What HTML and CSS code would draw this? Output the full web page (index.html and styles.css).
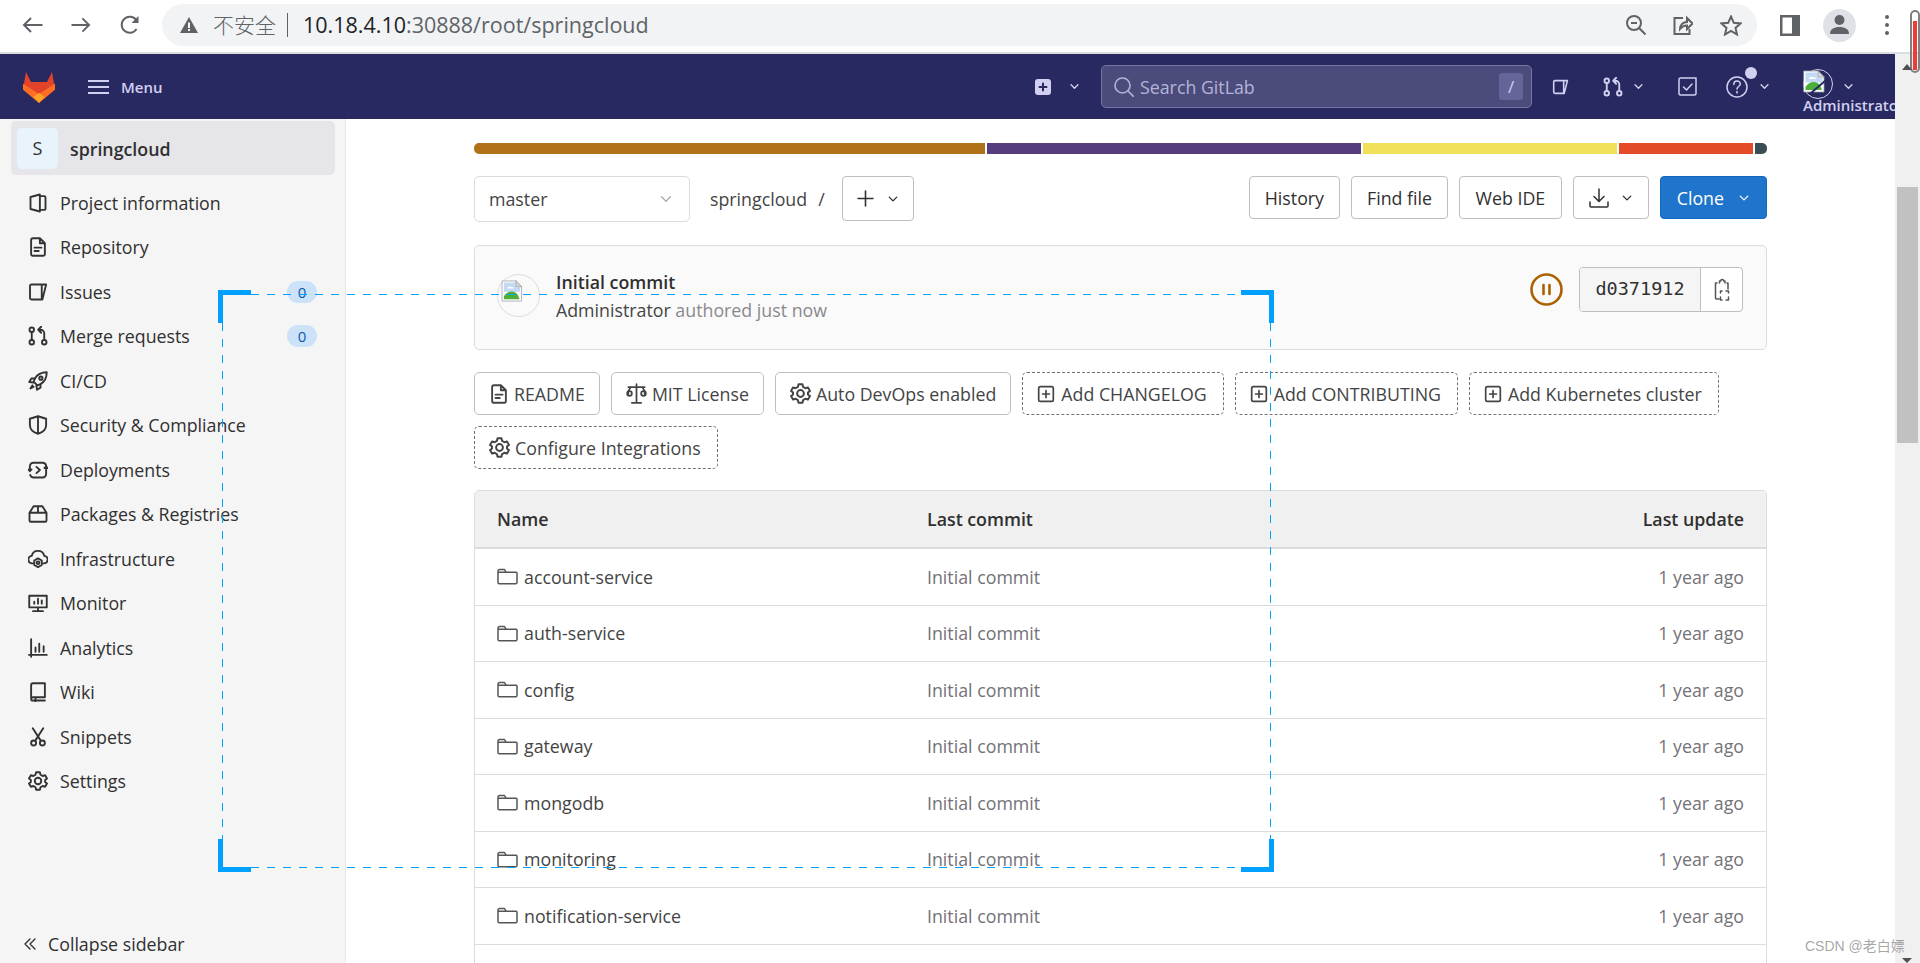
FILE: index.html
```html
<!DOCTYPE html>
<html>
<head>
    <title>springcloud</title>
    <link rel="stylesheet" href="styles.css">
</head>
<body>
    <svg class="icon-defs" width="0" height="0">
        <defs>
            <symbol id="i-project" viewBox="0 0 16 16"><path d="M2 3.2 9.5 1.2v13.6L2 12.8zM9.5 2.5h3.5a1 1 0 0 1 1 1v9a1 1 0 0 1-1 1H9.5"/></symbol>
            <symbol id="i-doc" viewBox="0 0 16 16"><path d="M2.5 2.5A1.5 1.5 0 0 1 4 1h5.5l4 4v8.5A1.5 1.5 0 0 1 12 15H4a1.5 1.5 0 0 1-1.5-1.5zM9.5 1v4h4M5.2 8.5h5.6M5.2 11.2h3.4"/></symbol>
            <symbol id="i-issues" viewBox="0 0 16 16"><path d="M2.8 2h11.7l-3 12H2.8a1.2 1.2 0 0 1-1.2-1.2V3.2A1.2 1.2 0 0 1 2.8 2zM11 2v12"/></symbol>
            <symbol id="i-mr" viewBox="0 0 16 16"><circle cx="3" cy="3" r="1.8"/><circle cx="3" cy="13" r="1.8"/><circle cx="13" cy="13" r="1.8"/><path d="M3 4.8v6.4M13 11.2V6a3 3 0 0 0-3-3H8.5M10.5.6 8.2 3l2.3 2.4"/></symbol>
            <symbol id="i-rocket" viewBox="0 0 16 16"><path d="M15 1c-4.500 0-7.500 1.500-9.500 5L4.500 8.500l3 3 2.500-1c3.500-2 5-5 5-9.500z"/><circle cx="10.300" cy="5.700" r="1.300"/><path d="M5.500 6H2.700L1 8.800l3.500.5M10 10.500v2.800L7.200 15l-.5-3.500M3.500 11.500 2 14l2.500-1.500"/></symbol>
            <symbol id="i-shield" viewBox="0 0 16 16"><path d="M8 1l6.500 2v5c0 3.400-2.500 5.800-6.500 7-4-1.200-6.500-3.600-6.500-7V3zM8 1v14"/></symbol>
            <symbol id="i-deploy" viewBox="0 0 16 16"><path d="M1.500 9V5A2.800 2.800 0 0 1 4.300 2.200H12a2.800 2.800 0 0 1 2.500 2.500M14.500 7v4.200A2.800 2.800 0 0 1 11.700 14H4.300a2.800 2.800 0 0 1-2.500-2M6.800 5.500 9.500 8l-2.700 2.500M.2 7.500l1.300 1.500 1.300-1.500M13.200 6.500l1.300-1.500 1.300 1.500"/></symbol>
            <symbol id="i-package" viewBox="0 0 16 16"><path d="M1.200 7 4.500 1.800h7L14.800 7v6.200a1 1 0 0 1-1 1H2.200a1 1 0 0 1-1-1zM1.200 7h13.600M8 1.800V7"/></symbol>
            <symbol id="i-infra" viewBox="0 0 16 16"><path d="M4 11.500H3.500a3 3 0 0 1-.5-6C3.500 3 5.500 1.500 8 1.500s4.500 1.500 5 4a3 3 0 0 1-.5 6H12"/><path d="M8 7.500l3 1.700v3.600L8 14.500l-3-1.700V9.200z"/><circle cx="8" cy="11" r="1.100"/></symbol>
            <symbol id="i-monitor" viewBox="0 0 16 16"><path d="M1 2.200h14v9.300H1zM8 11.500V14M4 14.500h8M5 8.500V7M8 8.500V4.500M11 8.500V6"/></symbol>
            <symbol id="i-analytics" viewBox="0 0 16 16"><path d="M2.500 1v14M.8 13.500H15M6 11V7.500M9 11V4.500M12.500 11V6.500"/></symbol>
            <symbol id="i-wiki" viewBox="0 0 16 16"><path d="M2.500 13.200V2.500A1.500 1.500 0 0 1 4 1h9.500v11.200H3.800a1.300 1.300 0 0 0 0 2.600h9.700M6 12.500v3"/></symbol>
            <symbol id="i-snippets" viewBox="0 0 16 16"><path d="M3.800 1l6 9.300M12.200 1l-6 9.300"/><circle cx="4.500" cy="12.800" r="2"/><circle cx="11.500" cy="12.800" r="2"/></symbol>
            <symbol id="i-gear" viewBox="0 0 16 16"><path d="M6.500 1H9.500L10 3 11.700 4 13.700 3.400 15.200 6 13.700 7.200V8.800L15.200 10 13.700 12.600 11.700 12 10 13 9.500 15H6.500L6 13 4.300 12 2.300 12.600.8 10 2.300 8.800V7.200L.8 6 2.300 3.400 4.300 4 6 3Z"/><circle cx="8" cy="8" r="2.600"/></symbol>
            <symbol id="i-chev" viewBox="0 0 16 16"><path d="M3 5.500l5 5 5-5"/></symbol>
            <symbol id="i-add" viewBox="0 0 16 16"><rect x="1.500" y="1.500" width="13" height="13" rx="1.500"/><path d="M8 5v6M5 8h6"/></symbol>
            <symbol id="i-folder" viewBox="0 0 21 17"><path d="M1 3a1.500 1.500 0 0 1 1.500-1.500H7.500L9 4.200H19a1.200 1.200 0 0 1 1 1.100V14.500A1.200 1.200 0 0 1 19 15.700H2.200A1.200 1.200 0 0 1 1 14.500zM1 4.200h8"/></symbol>
            <symbol id="i-broken" viewBox="0 0 22 23">
                <path class="b-page" d="M1 1h14l6 6v15H1z"/>
                <path class="b-sky" d="M2.500 2.500h12v5h5v5H2.500z"/>
                <path class="b-cloud" d="M6 9c0-2 3-3 4.500-1.500C12 7 13 8 13 9z"/>
                <path class="b-hill" d="M2.500 20v-3c3-5 8-6 12-4 2 1 3 3 4.500 7z"/>
                <path class="b-fold" d="M15 1v6h6z"/>
            </symbol>
        </defs>
    </svg>

    <div class="chrome">
        <svg class="c-icon back" viewBox="0 0 21 16"><path d="M20.500 8H2M9 1 2 8l7 7"/></svg>
        <svg class="c-icon forward" viewBox="0 0 21 16"><path d="M.5 8H19M12 1l7 7-7 7"/></svg>
        <svg class="c-icon reload" viewBox="0 0 21 20"><path d="M17.500 14a8 8 0 1 1 0-8.500"/><path class="c-fill" d="M19.500 1v7h-7z"/></svg>
        <div class="omnibox">
            <svg class="warn" viewBox="0 0 18 16"><path d="M9 0 18 16H0z"/><path class="warn-mark" d="M8 5.500h2v5.500H8zM8 12h2v2H8z"/></svg>
            <span class="insecure">不安全</span>
            <span class="sep"></span>
            <span class="url"><b>10.18.4.10</b>:30888/root/springcloud</span>
            <div class="omni-actions">
                <svg class="c-icon zoom-out" viewBox="0 0 20 20"><circle cx="8" cy="8" r="7"/><path d="M13 13l6.500 6.500M5 8h6"/></svg>
                <svg class="c-icon share" viewBox="0 0 20 20"><path d="M10 3H1.500v16h15v-5"/><path d="M7 14c0-4 3-7 7-7V3l5.500 5.500L14 14v-3.500c-3 0-5 1-7 3.500z"/></svg>
                <svg class="c-icon star" viewBox="0 0 22 21"><path d="M11 1.500l2.800 6.300 6.700.6-5 4.500 1.500 6.600-6-3.500-6 3.500 1.500-6.600-5-4.500 6.700-.6z"/></svg>
            </div>
        </div>
        <svg class="panel" viewBox="0 0 20 21"><path d="M0 0h20v21H0zM2.500 2.500v16H12v-16z"/></svg>
        <div class="profile">
            <svg viewBox="0 0 33 33"><circle cx="16.500" cy="11" r="5"/><path d="M7 25c0-5 4-7 9.500-7s9.500 2 9.500 7z"/></svg>
        </div>
        <div class="dots"><i></i><i></i><i></i></div>
    </div>

    <div class="window">
        <div class="viewport">
            <div class="navbar">
                <svg class="logo" viewBox="0 0 34 34">
                    <path fill="#e24329" d="M17 33 1 19.500 4 2 9 12h16L30 2l3 17.500z"/>
                    <path fill="#fc6d26" d="M1 13.500 17 24 11 27 17 33 1 19.500z"/>
                    <path fill="#fc6d26" d="M33 13.500 17 24 23 27 17 33 33 19.500z"/>
                    <path fill="#fca326" d="M17 33 11 27 17 23 23 27z"/>
                </svg>
                <svg class="menu-icon" viewBox="0 0 21 14"><path d="M0 1h21M0 7h21M0 13h21"/></svg>
                <span class="menu-label">Menu</span>

                <div class="nav-right">
                    <svg class="new-box" viewBox="0 0 16 16"><path class="new-bg" d="M3 0h10a3 3 0 0 1 3 3v10a3 3 0 0 1-3 3H3a3 3 0 0 1-3-3V3a3 3 0 0 1 3-3z"/><path class="new-plus" d="M8 4.500v7M4.500 8h7"/></svg>
                    <svg class="nav-chev ml-18"><use href="#i-chev"/></svg>
                    <div class="search">
                        <svg class="search-icon" viewBox="0 0 20 20"><circle cx="8.500" cy="8.500" r="7.500"/><path d="M14 14l5.500 5.500"/></svg>
                        <span>Search GitLab</span>
                        <span class="slash">/</span>
                    </div>
                    <svg class="nav-icon w17 ml-20"><use href="#i-issues"/></svg>
                    <svg class="nav-icon w20 ml-34"><use href="#i-mr"/></svg>
                    <svg class="nav-chev ml-10"><use href="#i-chev"/></svg>
                    <svg class="nav-icon w19 ml-34" viewBox="0 0 19 19"><path d="M18 1H2.500A1.500 1.500 0 0 0 1 2.500v14A1.500 1.500 0 0 0 2.500 18h14a1.500 1.500 0 0 0 1.500-1.500V1zM5.500 10l3 3 5.500-6"/></svg>
                    <div class="help">
                        <svg class="nav-icon w22" viewBox="0 0 22 22"><circle cx="11" cy="11" r="10"/><path d="M7.800 8.500c0-4.500 6.500-4.500 6.500-.5 0 2.500-3.300 2.500-3.300 5M11 15.500v1.500"/></svg>
                        <span class="help-dot"></span>
                    </div>
                    <svg class="nav-chev ml-11"><use href="#i-chev"/></svg>
                    <div class="user">
                        <svg class="user-img" viewBox="0 0 22 23"><use href="#i-broken"/><path class="user-slash" d="M8 23 22 11"/></svg>
                        <span class="user-name">Administrator</span>
                    </div>
                    <svg class="nav-chev ml-10"><use href="#i-chev"/></svg>
                </div>
            </div>

            <div class="page">
                <aside class="sidebar">
                    <div class="project-head">
                        <span class="project-avatar">S</span>
                        <span class="project-name">springcloud</span>
                    </div>
                    <a class="side-item"><svg class="side-icon"><use href="#i-project"/></svg>Project information</a>
                    <a class="side-item"><svg class="side-icon"><use href="#i-doc"/></svg>Repository</a>
                    <a class="side-item"><svg class="side-icon"><use href="#i-issues"/></svg>Issues<span class="count">0</span></a>
                    <a class="side-item"><svg class="side-icon"><use href="#i-mr"/></svg>Merge requests<span class="count">0</span></a>
                    <a class="side-item"><svg class="side-icon"><use href="#i-rocket"/></svg>CI/CD</a>
                    <a class="side-item"><svg class="side-icon"><use href="#i-shield"/></svg>Security &amp; Compliance</a>
                    <a class="side-item"><svg class="side-icon"><use href="#i-deploy"/></svg>Deployments</a>
                    <a class="side-item"><svg class="side-icon"><use href="#i-package"/></svg>Packages &amp; Registries</a>
                    <a class="side-item"><svg class="side-icon"><use href="#i-infra"/></svg>Infrastructure</a>
                    <a class="side-item"><svg class="side-icon"><use href="#i-monitor"/></svg>Monitor</a>
                    <a class="side-item"><svg class="side-icon"><use href="#i-analytics"/></svg>Analytics</a>
                    <a class="side-item"><svg class="side-icon"><use href="#i-wiki"/></svg>Wiki</a>
                    <a class="side-item"><svg class="side-icon"><use href="#i-snippets"/></svg>Snippets</a>
                    <a class="side-item"><svg class="side-icon"><use href="#i-gear"/></svg>Settings</a>
                    <div class="collapse">
                        <svg viewBox="0 0 12 12"><path d="M6 1 1 6l5 5M11 1 6 6l5 5"/></svg>
                        Collapse sidebar
                    </div>
                </aside>

                <main class="content">
                    <div class="lang-bar">
                        <span class="lang java"></span>
                        <span class="lang docker"></span>
                        <span class="lang js"></span>
                        <span class="lang html"></span>
                        <span class="lang other"></span>
                    </div>

                    <div class="tree-bar">
                        <div class="branch">master<svg class="branch-chev"><use href="#i-chev"/></svg></div>
                        <span class="crumb">springcloud</span>
                        <span class="crumb-slash">/</span>
                        <button class="btn add-btn"><svg class="plus" viewBox="0 0 16 16"><path d="M8 1v14M1 8h14"/></svg><svg class="btn-chev"><use href="#i-chev"/></svg></button>
                        <div class="tree-actions">
                            <button class="btn">History</button>
                            <button class="btn">Find file</button>
                            <button class="btn web-ide">Web IDE</button>
                            <button class="btn dl-btn"><svg class="btn-icon" viewBox="0 0 20 20"><path d="M10 1v12M5 8.500l5 5 5-5M1 14v4a1 1 0 0 0 1 1h16a1 1 0 0 0 1-1v-4"/></svg><svg class="btn-chev"><use href="#i-chev"/></svg></button>
                            <button class="btn clone">Clone<svg class="btn-chev"><use href="#i-chev"/></svg></button>
                        </div>
                    </div>

                    <div class="commit">
                        <div class="commit-avatar"><svg><use href="#i-broken"/></svg></div>
                        <div class="commit-text">
                            <div class="commit-title">Initial commit</div>
                            <div class="commit-meta">Administrator <span>authored just now</span></div>
                        </div>
                        <svg class="status" viewBox="0 0 33 33"><circle cx="16.500" cy="16.500" r="15"/><path d="M13.500 12v9M19.500 12v9"/></svg>
                        <div class="sha-group">
                            <span class="sha">d0371912</span>
                            <span class="sha-copy">
                                <svg viewBox="0 0 16 24"><path d="M3 5H1.500v15a1 1 0 0 0 1 1H5M5.500 5V3h1.200a1.500 1.500 0 0 1 3 0h1.300v2M13 5h1v6M8 13H6.500v2M12 13h2.500v2M6.500 19v3h1.500M14.500 19v3H12"/></svg>
                            </span>
                        </div>
                    </div>

                    <div class="shortcuts">
                        <a class="pill"><svg class="pill-icon"><use href="#i-doc"/></svg>README</a>
                        <a class="pill"><svg class="pill-icon wide" viewBox="0 0 18 18"><path d="M9 1v15M5 17h8M2 3.500h14M4 3.500 2 7v2.500M14 3.500 16 7v2.500"/><circle cx="3" cy="9" r="2"/><circle cx="15" cy="9" r="2"/></svg>MIT License</a>
                        <a class="pill"><svg class="pill-icon wide"><use href="#i-gear"/></svg>Auto DevOps enabled</a>
                        <a class="pill dashed"><svg class="pill-icon small"><use href="#i-add"/></svg>Add CHANGELOG</a>
                        <a class="pill dashed"><svg class="pill-icon small"><use href="#i-add"/></svg>Add CONTRIBUTING</a>
                        <a class="pill dashed"><svg class="pill-icon small"><use href="#i-add"/></svg>Add Kubernetes cluster</a>
                        <a class="pill dashed"><svg class="pill-icon wide"><use href="#i-gear"/></svg>Configure Integrations</a>
                    </div>

                    <div class="files">
                        <div class="file-row file-head">
                            <span>Name</span><span>Last commit</span><span class="when">Last update</span>
                        </div>
                        <div class="file-row"><span class="fname"><svg class="folder"><use href="#i-folder"/></svg>account-service</span><span class="msg">Initial commit</span><span class="when">1 year ago</span></div>
                        <div class="file-row"><span class="fname"><svg class="folder"><use href="#i-folder"/></svg>auth-service</span><span class="msg">Initial commit</span><span class="when">1 year ago</span></div>
                        <div class="file-row"><span class="fname"><svg class="folder"><use href="#i-folder"/></svg>config</span><span class="msg">Initial commit</span><span class="when">1 year ago</span></div>
                        <div class="file-row"><span class="fname"><svg class="folder"><use href="#i-folder"/></svg>gateway</span><span class="msg">Initial commit</span><span class="when">1 year ago</span></div>
                        <div class="file-row"><span class="fname"><svg class="folder"><use href="#i-folder"/></svg>mongodb</span><span class="msg">Initial commit</span><span class="when">1 year ago</span></div>
                        <div class="file-row"><span class="fname"><svg class="folder"><use href="#i-folder"/></svg>monitoring</span><span class="msg">Initial commit</span><span class="when">1 year ago</span></div>
                        <div class="file-row"><span class="fname"><svg class="folder"><use href="#i-folder"/></svg>notification-service</span><span class="msg">Initial commit</span><span class="when">1 year ago</span></div>
                        <div class="file-row"></div>
                    </div>
                </main>
            </div>
        </div>

        <div class="scrollbar"><div class="thumb"></div></div>
    </div>

    <!-- screenshot tool selection drawn over the page -->
    <div class="crop">
        <span class="crop-line top"></span>
        <span class="crop-line bottom"></span>
        <span class="crop-line left"></span>
        <span class="crop-line right"></span>
        <span class="corner tl"></span>
        <span class="corner tr"></span>
        <span class="corner bl"></span>
        <span class="corner br"></span>
    </div>

    <div class="tool-marker"><i></i></div>
    <span class="arrow-up"></span>
    <span class="arrow-down"></span>
    <span class="watermark">CSDN @老白嫖</span>
</body>
</html>
```

FILE: styles.css
```css
/* GENERAL */
html, body {
    margin: 0;
    padding: 0;
    height: 100%;
    overflow: hidden;
}

body {
    background-color: #fff;
    color: #303030;
    font-family: 'Open Sans', 'Noto Sans CJK SC', sans-serif;
    font-size: 17.8px;
}

svg {
    flex: none;
    fill: none;
    stroke: currentColor;
    stroke-width: 1.5;
    stroke-linejoin: round;
    stroke-linecap: round;
}

.icon-defs {
    position: absolute;
}

.b-page { fill: #fff; stroke: #9aa0a6; stroke-width: .8; }
.b-sky { fill: #c3d9f5; stroke: none; }
.b-cloud { fill: #fff; stroke: none; }
.b-hill { fill: #4caf3a; stroke: none; }
.b-fold { fill: #d5d7da; stroke: #9aa0a6; stroke-width: .8; }


/* BROWSER BAR */
.chrome {
    display: flex;
    align-items: center;
    height: 50px;
    padding: 0 31px 2px 22px;
    border-bottom: 2px solid #dadce0;
    color: #5f6368;
}

.c-icon {
    stroke-width: 2;
    stroke-linecap: butt;
    stroke-linejoin: miter;
}

.c-fill {
    fill: #5f6368;
    stroke: none;
}

.back { width: 21px; height: 16px; }
.forward { width: 20px; height: 16px; margin-left: 28px; }
.reload { width: 21px; height: 20px; margin-left: 28px; }

.omnibox {
    display: flex;
    align-items: center;
    flex: 1;
    height: 42px;
    margin-left: 22px;
    padding: 0 15px 0 18px;
    background-color: #f1f3f4;
    border-radius: 21px;
}

.warn {
    width: 18px;
    height: 16px;
    fill: #5f6368;
    stroke: none;
}

.warn-mark {
    fill: #f1f3f4;
}

.insecure {
    margin-left: 15px;
    margin-top: -2px;
    font-size: 21px;
    font-family: 'Noto Sans CJK SC', sans-serif;
    font-weight: 300;
}

.sep {
    width: 1px;
    height: 24px;
    margin-left: 11px;
    background-color: #5f6368;
}

.url {
    margin-left: 15px;
    margin-top: -2px;
    font-size: 21.5px;
    white-space: nowrap;
}

.url b {
    font-weight: 400;
    color: #202124;
}

.omni-actions {
    display: flex;
    align-items: center;
    margin-left: auto;
    gap: 27px;
}

.zoom-out, .share { width: 20px; height: 20px; }
.star { width: 22px; height: 21px; }

.panel {
    width: 20px;
    height: 21px;
    margin-left: 23px;
    fill: #5f6368;
    fill-rule: evenodd;
    stroke: none;
}

.profile {
    width: 33px;
    height: 33px;
    margin-left: 23px;
    border-radius: 50%;
    background-color: #dee1e6;
}

.profile svg {
    display: block;
    fill: #5f6368;
    stroke: none;
}

.dots {
    display: flex;
    flex-direction: column;
    gap: 4px;
    margin-left: 29px;
}

.dots i {
    width: 4px;
    height: 4px;
    border-radius: 50%;
    background-color: #5f6368;
}


/* WINDOW */
.window {
    display: flex;
    height: 909px;
}

.viewport {
    flex: 1;
    min-width: 0;
    display: flex;
    flex-direction: column;
}

.scrollbar {
    flex: none;
    width: 25px;
    background-color: #f0f0f0;
    position: relative;
    padding-top: 133px;
    box-sizing: border-box;
}

.thumb {
    width: 21px;
    height: 256px;
    margin-left: 2px;
    background-color: #c1c1c1;
}


/* NAVBAR */
.navbar {
    display: flex;
    align-items: center;
    flex: none;
    height: 65px;
    padding-left: 22px;
    background-color: #292961;
    color: #d1d0f0;
    overflow: hidden;
}

.logo {
    width: 34px;
    height: 34px;
    stroke: none;
}

.menu-icon {
    width: 21px;
    height: 14px;
    margin-left: 32px;
    stroke-width: 2;
}

.menu-label {
    margin-left: 12px;
    font-size: 15px;
    font-weight: 600;
}

.nav-right {
    display: flex;
    align-items: center;
    margin-left: auto;
    padding-right: 41px;
}

.new-box {
    width: 16px;
    height: 16px;
    stroke: none;
}

.new-bg { fill: #d1d0f0; }
.new-plus { stroke: #292961; stroke-width: 2; }

.nav-chev {
    width: 11px;
    height: 11px;
    stroke-width: 2;
}

.ml-10 { margin-left: 10px; }
.ml-11 { margin-left: 11px; }
.ml-18 { margin-left: 18px; }
.ml-20 { margin-left: 20px; }
.ml-34 { margin-left: 34px; }

.search {
    display: flex;
    align-items: center;
    width: 431px;
    height: 43px;
    margin-left: 21px;
    padding: 0 8px 0 12px;
    box-sizing: border-box;
    background-color: #4c4c7c;
    border: 1px solid #7676a0;
    border-radius: 5px;
    color: #b5b4d8;
}

.search-icon {
    width: 20px;
    height: 20px;
    margin-right: 6px;
    stroke-width: 1.6;
}

.slash {
    margin-left: auto;
    width: 24px;
    height: 27px;
    line-height: 27px;
    text-align: center;
    background-color: #65659a;
    border-radius: 3px;
    font-size: 17px;
    color: #d1d0f0;
}

.nav-icon { height: 20px; }
.w17 { width: 17px; height: 18px; }
.w19 { width: 19px; height: 19px; }
.w20 { width: 20px; }
.w22 { width: 22px; height: 22px; }

.help {
    position: relative;
    display: flex;
    margin-left: 29px;
}

.help-dot {
    position: absolute;
    left: 19px;
    top: -9px;
    width: 12px;
    height: 12px;
    border-radius: 50%;
    background-color: #d1d0f0;
}

.user {
    position: relative;
    width: 30px;
    height: 30px;
    margin-left: 33px;
    margin-top: -5px;
    border: 1px solid #d1d0f0;
    border-radius: 50%;
    box-sizing: border-box;
}

.user-img {
    position: absolute;
    left: -1px;
    top: 0;
    width: 22px;
    height: 23px;
}

.user-slash {
    stroke: #292961;
    stroke-width: 2;
}

.user-name {
    position: absolute;
    left: -1px;
    top: 25px;
    font-size: 15px;
    font-weight: 600;
    line-height: 20px;
    white-space: nowrap;
}


/* PAGE */
.page {
    flex: 1;
    min-height: 0;
    display: flex;
}

.sidebar {
    flex: none;
    display: flex;
    flex-direction: column;
    width: 346px;
    height: 844px;
    padding-top: 2px;
    box-sizing: border-box;
    background-color: #f5f5f5;
    border-right: 1px solid #e8e8e8;
}

.project-head {
    display: flex;
    align-items: center;
    height: 54px;
    margin: 0 10px 5.5px 11px;
    padding-left: 6px;
    background-color: #e5e5ea;
    border-radius: 5px;
    font-weight: 600;
}

.project-avatar {
    display: flex;
    align-items: center;
    justify-content: center;
    width: 41px;
    height: 41px;
    margin-right: 12px;
    background-color: #e9f3fc;
    border-radius: 5px;
    font-weight: 400;
    font-size: 18px;
}

.project-name {
    margin-top: 2px;
}

.side-item {
    display: flex;
    align-items: center;
    height: 44.5px;
    padding-left: 28px;
    white-space: nowrap;
}

.side-icon {
    width: 20px;
    height: 20px;
    margin-right: 12px;
    color: #333;
}

.count {
    margin-left: auto;
    margin-right: 28px;
    width: 30px;
    height: 22px;
    line-height: 22px;
    text-align: center;
    border-radius: 11px;
    background-color: #cbe2f9;
    color: #0b5cad;
    font-size: 15px;
}

.collapse {
    display: flex;
    align-items: center;
    margin-top: auto;
    height: 38px;
    padding-left: 24px;
    gap: 12px;
}

.collapse svg {
    width: 12px;
    height: 12px;
    stroke-width: 1.4;
}


/* CONTENT */
.content {
    flex: 1;
    min-width: 0;
    height: 844px;
    overflow: hidden;
    padding: 24px 128px 0;
    box-sizing: border-box;
}

.lang-bar {
    display: flex;
    gap: 2px;
    height: 11px;
    border-radius: 5px;
    overflow: hidden;
}

.lang { display: block; }
.java { width: 511px; background-color: #b07219; }
.docker { width: 374px; background-color: #563d7c; }
.js { width: 254px; background-color: #f1e05a; }
.html { width: 134px; background-color: #e34c26; }
.other { flex: 1; background-color: #384d54; }

.tree-bar {
    display: flex;
    align-items: flex-start;
    margin-top: 22px;
    height: 46px;
}

.branch {
    display: flex;
    align-items: center;
    justify-content: space-between;
    width: 216px;
    height: 46px;
    padding: 0 16px 0 14px;
    box-sizing: border-box;
    border: 1px solid #dcdcde;
    border-radius: 5px;
    color: #444;
}

.branch-chev {
    width: 14px;
    height: 14px;
    color: #aaa;
}

.crumb {
    margin-left: 20px;
    line-height: 46px;
    color: #444;
}

.crumb-slash {
    margin-left: 11px;
    line-height: 46px;
    color: #444;
}

.btn {
    display: inline-flex;
    align-items: center;
    height: 43px;
    padding: 0 15px;
    background-color: #fff;
    border: 1px solid #bfbfc3;
    border-radius: 4px;
    font-family: inherit;
    font-size: 17.8px;
    color: #303030;
}

.add-btn {
    width: 72px;
    height: 45px;
    margin-left: 17px;
    justify-content: space-between;
    padding: 0 14px;
}

.plus {
    width: 17px;
    height: 17px;
}

.btn-chev {
    width: 12px;
    height: 12px;
    stroke-width: 1.8;
}

.tree-actions {
    display: flex;
    gap: 11px;
    margin-left: auto;
}

.web-ide {
    padding: 0 15.5px;
}

.dl-btn {
    gap: 12px;
}

.btn-icon {
    width: 20px;
    height: 20px;
}

.clone {
    gap: 14px;
    padding: 0 16px;
    background-color: #1f75cb;
    border-color: #1068bf;
    color: #fff;
}

.commit {
    display: flex;
    align-items: center;
    height: 105px;
    margin-top: 23px;
    padding: 0 23px 4px 22px;
    box-sizing: border-box;
    background-color: #fafafa;
    border: 1px solid #dcdcde;
    border-radius: 5px;
}

.commit-avatar {
    flex: none;
    width: 43px;
    height: 43px;
    padding: 5px 0 0 3px;
    box-sizing: border-box;
    border: 1px solid #dcdcde;
    border-radius: 50%;
}

.commit-avatar svg {
    display: block;
    width: 22px;
    height: 22px;
}

.commit-text {
    margin-left: 16px;
    line-height: 28px;
}

.commit-title {
    font-weight: 600;
}

.commit-meta {
    color: #444;
}

.commit-meta span {
    color: #89888d;
}

.status {
    width: 33px;
    height: 33px;
    margin-left: auto;
    margin-bottom: 12px;
    color: #ab6100;
    stroke-width: 2.6;
}

.sha-group {
    display: flex;
    height: 43px;
    margin-left: 16px;
    margin-bottom: 12px;
    border: 1px solid #bfbfc3;
    border-radius: 4px;
    overflow: hidden;
    background-color: #fff;
}

.sha {
    width: 120px;
    line-height: 41px;
    text-align: center;
    border-right: 1px solid #bfbfc3;
    background-color: #f5f5f5;
    font-family: 'DejaVu Sans Mono', monospace;
    font-size: 18.5px;
}

.sha-copy {
    display: flex;
    align-items: center;
    justify-content: center;
    width: 41px;
}

.sha-copy svg {
    width: 16px;
    height: 24px;
    color: #555;
}

.shortcuts {
    display: flex;
    flex-wrap: wrap;
    gap: 11px;
    margin-top: 22px;
    width: 1250px;
}

.pill {
    display: inline-flex;
    align-items: center;
    height: 43px;
    padding: 0 14px 0 14px;
    box-sizing: border-box;
    background-color: #fff;
    border: 1px solid #bfbfc3;
    border-radius: 5px;
    color: #444;
    white-space: nowrap;
}

.pill.dashed {
    padding-right: 16px;
    border: 1px dashed #737278;
}

.pill-icon {
    width: 20px;
    height: 20px;
    margin-right: 5px;
    color: #444;
}

.pill-icon.small {
    width: 18px;
    height: 18px;
    margin-right: 6px;
}

.pill-icon.wide {
    width: 21px;
    height: 21px;
    margin-right: 5px;
}

.files {
    margin-top: 21px;
    border: 1px solid #dcdcde;
    border-bottom: 0;
    border-radius: 5px 5px 0 0;
}

.file-row {
    display: grid;
    grid-template-columns: 430px 1fr auto;
    align-items: center;
    height: 56.5px;
    padding: 0 22px;
    box-sizing: border-box;
    border-bottom: 1px solid #dcdcde;
}

.file-head {
    height: 58px;
    border-bottom-width: 2px;
    background-color: #f0f0f0;
    font-weight: 600;
}

.fname {
    display: flex;
    align-items: center;
    color: #444;
}

.folder {
    width: 21px;
    height: 17px;
    margin-right: 6px;
    color: #555;
}

.msg, .when {
    color: #737278;
}

.file-head .when {
    color: #303030;
}


/* OVERLAYS */
.crop {
    position: absolute;
    left: 218px;
    top: 290px;
    width: 1056px;
    height: 582px;
    pointer-events: none;
}

.crop-line {
    position: absolute;
}

.crop-line.top, .crop-line.bottom {
    left: 33px;
    right: 33px;
    height: 1px;
    background-image: repeating-linear-gradient(90deg, #00a0ff 0 8px, transparent 8px 16px);
}

.crop-line.left, .crop-line.right {
    top: 33px;
    bottom: 33px;
    width: 1px;
    background-image: repeating-linear-gradient(180deg, #00a0ff 0 8px, transparent 8px 16px);
}

.crop-line.top { top: 4px; }
.crop-line.bottom { bottom: 4px; }
.crop-line.left { left: 4px; }
.crop-line.right { right: 3px; }

.corner {
    position: absolute;
    width: 28px;
    height: 28px;
    border: 0 solid #00a0ff;
}

.corner.tl { left: 0; top: 0; border-width: 5px 0 0 5px; }
.corner.tr { right: 0; top: 0; border-width: 5px 5px 0 0; }
.corner.bl { left: 0; bottom: 0; border-width: 0 0 5px 5px; }
.corner.br { right: 0; bottom: 0; border-width: 0 5px 5px 0; }

.tool-marker {
    position: absolute;
    left: 1910px;
    top: 10px;
    width: 10px;
    height: 63px;
    padding: 9px 1px 1px;
    box-sizing: border-box;
    border: 2px solid #808080;
    border-radius: 5px;
}

.tool-marker i {
    display: block;
    height: 100%;
    background-color: #f03a3a;
}

.arrow-up, .arrow-down {
    position: absolute;
    left: 1902px;
    width: 0;
    height: 0;
    border-left: 5.500px solid transparent;
    border-right: 5.500px solid transparent;
}

.arrow-up {
    top: 64px;
    border-bottom: 6px solid #505050;
}

.arrow-down {
    top: 958px;
    border-top: 5px solid #505050;
}

.watermark {
    position: absolute;
    left: 1805px;
    top: 935px;
    font-family: 'Liberation Sans', 'Noto Sans CJK SC', sans-serif;
    font-size: 14px;
    color: rgba(90, 90, 90, .55);
}
```
